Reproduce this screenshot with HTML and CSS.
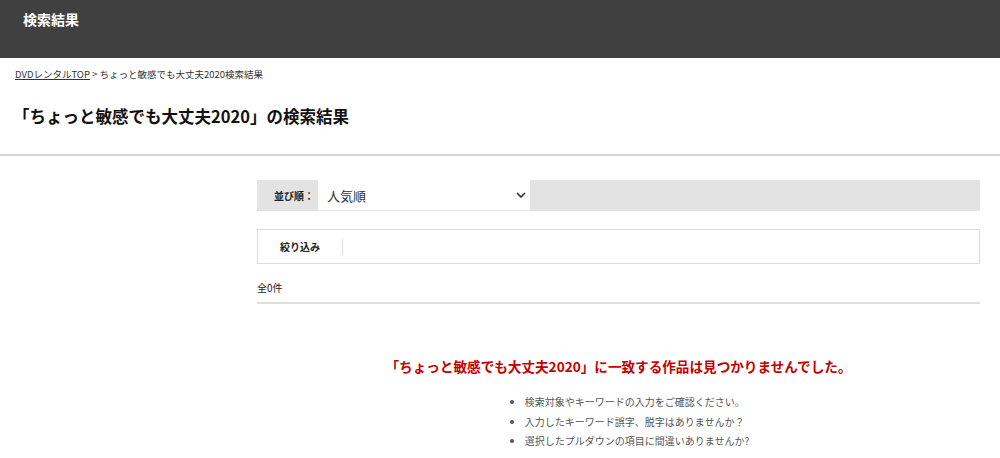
FILE: index.html
```html
<!DOCTYPE html>
<html lang="ja">
<head>
  <meta charset="utf-8">
  <title>検索結果</title>
  <link rel="stylesheet" href="styles.css">
</head>
<body>
  <header class="site-header">
    <p class="site-title">検索結果</p>
  </header>

  <div class="page-head">
    <div class="breadcrumb">
      <a href="#">DVDレンタルTOP</a> &gt; ちょっと敏感でも大丈夫2020検索結果
    </div>
    <h1 class="page-title">「ちょっと敏感でも大丈夫2020」の検索結果</h1>
  </div>

  <div class="main">
    <div class="sort-bar">
      <span class="sort-label">並び順：</span>
      <div class="sort-select">
        <span>人気順</span>
        <svg width="10" height="6" viewBox="0 0 10 6"><path d="M1 1l4 4 4-4" fill="none" stroke="#333" stroke-width="1.6"/></svg>
      </div>
    </div>

    <div class="filter-box">
      <span class="filter-label">絞り込み</span>
      <span class="filter-sep"></span>
    </div>

    <div class="count">全0件</div>

    <div class="no-result">
      <p class="no-result-title">「ちょっと敏感でも大丈夫2020」に一致する作品は見つかりませんでした。</p>
      <ul class="hints">
        <li>検索対象やキーワードの入力をご確認ください。</li>
        <li>入力したキーワード誤字、脱字はありませんか？</li>
        <li>選択したプルダウンの項目に間違いありませんか?</li>
      </ul>
    </div>
  </div>
</body>
</html>
```

FILE: styles.css
```css
body {
  margin: 0;
  font-family: "Noto Sans CJK JP", "Noto Sans", sans-serif;
  color: #222;
  background: #fff;
}

.site-header {
  background-color: #404040;
  height: 58px;
  padding: 0 23px;
  display: flex;
  align-items: flex-start;
}

.site-title {
  margin: 10px 0 0;
  color: #fff;
  font-size: 14px;
  font-weight: bold;
  line-height: 18px;
}

.page-head {
  padding: 9px 15px 0;
  border-bottom: 2px solid #d6d6d6;
  height: 87px;
}

.breadcrumb {
  font-size: 9.5px;
  line-height: 14px;
  color: #333;
}

.breadcrumb a {
  color: #333;
}

.page-title {
  margin: 23px 0 0 -2px;
  font-size: 16.5px;
  line-height: 24px;
  font-weight: bold;
  color: #111;
}

.main {
  margin: 0 20px 0 257px;
  padding-top: 24px;
}

.sort-bar {
  display: flex;
  background-color: #e3e3e3;
  height: 31px;
  padding-left: 17px;
}

.sort-label {
  font-size: 10px;
  font-weight: bold;
  line-height: 31px;
  width: 44px;
}

.sort-select {
  width: 212px;
  background: #fff;
  display: flex;
  align-items: center;
  justify-content: space-between;
  padding: 0 4px 0 9px;
  box-sizing: border-box;
  font-size: 13px;
  color: #333;
  border-bottom: 1px solid #e8e8e8;
}

.filter-box {
  margin-top: 18px;
  height: 33px;
  border: 1px solid #dcdcdc;
  display: flex;
  align-items: center;
}

.filter-label {
  font-size: 10px;
  font-weight: bold;
  width: 84px;
  text-align: center;
}

.filter-sep {
  width: 1px;
  height: 16px;
  background: #ddd;
}

.count {
  font-size: 10px;
  line-height: 14px;
  margin-top: 17px;
  padding-bottom: 7px;
  border-bottom: 2px solid #dedede;
}

.no-result {
  text-align: center;
  padding-top: 53px;
}

.no-result-title {
  margin: 0;
  color: #c40000;
  font-size: 13.6px;
  font-weight: bold;
  line-height: 18px;
}

.hints {
  display: inline-block;
  text-align: left;
  margin: 17px 0 0 19px;
  padding-left: 18px;
  font-size: 10px;
  line-height: 19.5px;
  color: #555;
}
```
